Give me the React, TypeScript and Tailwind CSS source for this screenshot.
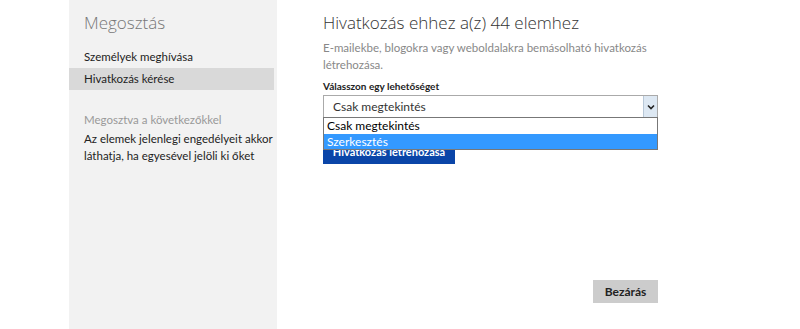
import React from "react";

export default function App() {
  const head = { fontFamily: '"Open Sans", "Noto Sans", sans-serif' };
  const body = { fontFamily: 'Lato, "Noto Sans", sans-serif' };
  return (
    <div className="w-[800px] h-[329px] bg-white flex overflow-hidden" style={body}>
      <div className="ml-[69px] w-[208px] h-[329px] bg-[#f2f2f2] flex flex-col">
        <div className="pl-[15px] pt-[12px] text-[17px] font-light text-[#777] leading-[22px]" style={head}>Megosztás</div>
        <div className="mt-[15px] pl-[15px] text-[11.5px] text-[#222] leading-[16px]">Személyek meghívása</div>
        <div className="mt-[3px] mr-[3px] h-[22px] bg-[#d9d9d9] pl-[15px] flex items-center text-[11.5px] text-[#222]">Hivatkozás kérése</div>
        <div className="mt-[22px] pl-[15px] text-[11.5px] text-[#999] leading-[16px]">Megosztva a következőkkel</div>
        <div className="mt-[2px] pl-[15px] pr-[4px] text-[11.5px] text-[#222] leading-[17px] whitespace-nowrap">
          Az elemek jelenlegi engedélyeit akkor
          <br />
          láthatja, ha egyesével jelöli ki őket
        </div>
      </div>
      <div className="ml-[46px] w-[335px] flex flex-col">
        <div className="pt-[12px] text-[17px] font-light text-[#333] leading-[22px] whitespace-nowrap" style={head}>Hivatkozás ehhez a(z) 44 elemhez</div>
        <div className="mt-[5px] text-[11.5px] text-[#888] leading-[17px] whitespace-nowrap">
          E-mailekbe, blogokra vagy weboldalakra bemásolható hivatkozás
          <br />
          létrehozása.
        </div>
        <div className="mt-[6px] text-[10px] font-bold text-[#222] leading-[14px]">Válasszon egy lehetőséget</div>
        <div className="relative mt-[2px]">
          <div className="h-[23px] border border-[#aaa] bg-white flex items-center">
            <span className="pl-[9px] text-[12px] text-[#333] flex-1">Csak megtekintés</span>
            <div className="w-[14px] h-[21px] bg-[#dde8f3] border-l border-[#b8c8d8] flex items-center justify-center">
              <svg width="8" height="6" viewBox="0 0 8 6">
                <path d="M1 1.5 L4 4.5 L7 1.5" stroke="#222" strokeWidth="1.6" fill="none" />
              </svg>
            </div>
          </div>
          <div className="mt-[16px] w-[132px] h-[30px] bg-[#0a45a8] text-white text-[11px] leading-[14px] font-bold flex items-end justify-center pb-[5px] whitespace-nowrap">
            Hivatkozás létrehozása
          </div>
          <div className="absolute left-0 top-[22px] w-[335px] border border-[#777] bg-white">
            <div className="h-[16px] pl-[3px] text-[12px] text-black leading-[16px]">Csak megtekintés</div>
            <div className="h-[15px] pl-[3px] text-[12px] text-white bg-[#3399ff] leading-[15px]">Szerkesztés</div>
          </div>
        </div>
        <div className="mt-auto mb-[26px] self-end w-[65px] h-[23px] bg-[#cccccc] text-[12px] font-bold text-[#222] flex items-center justify-center">
          Bezárás
        </div>
      </div>
    </div>
  );
}
